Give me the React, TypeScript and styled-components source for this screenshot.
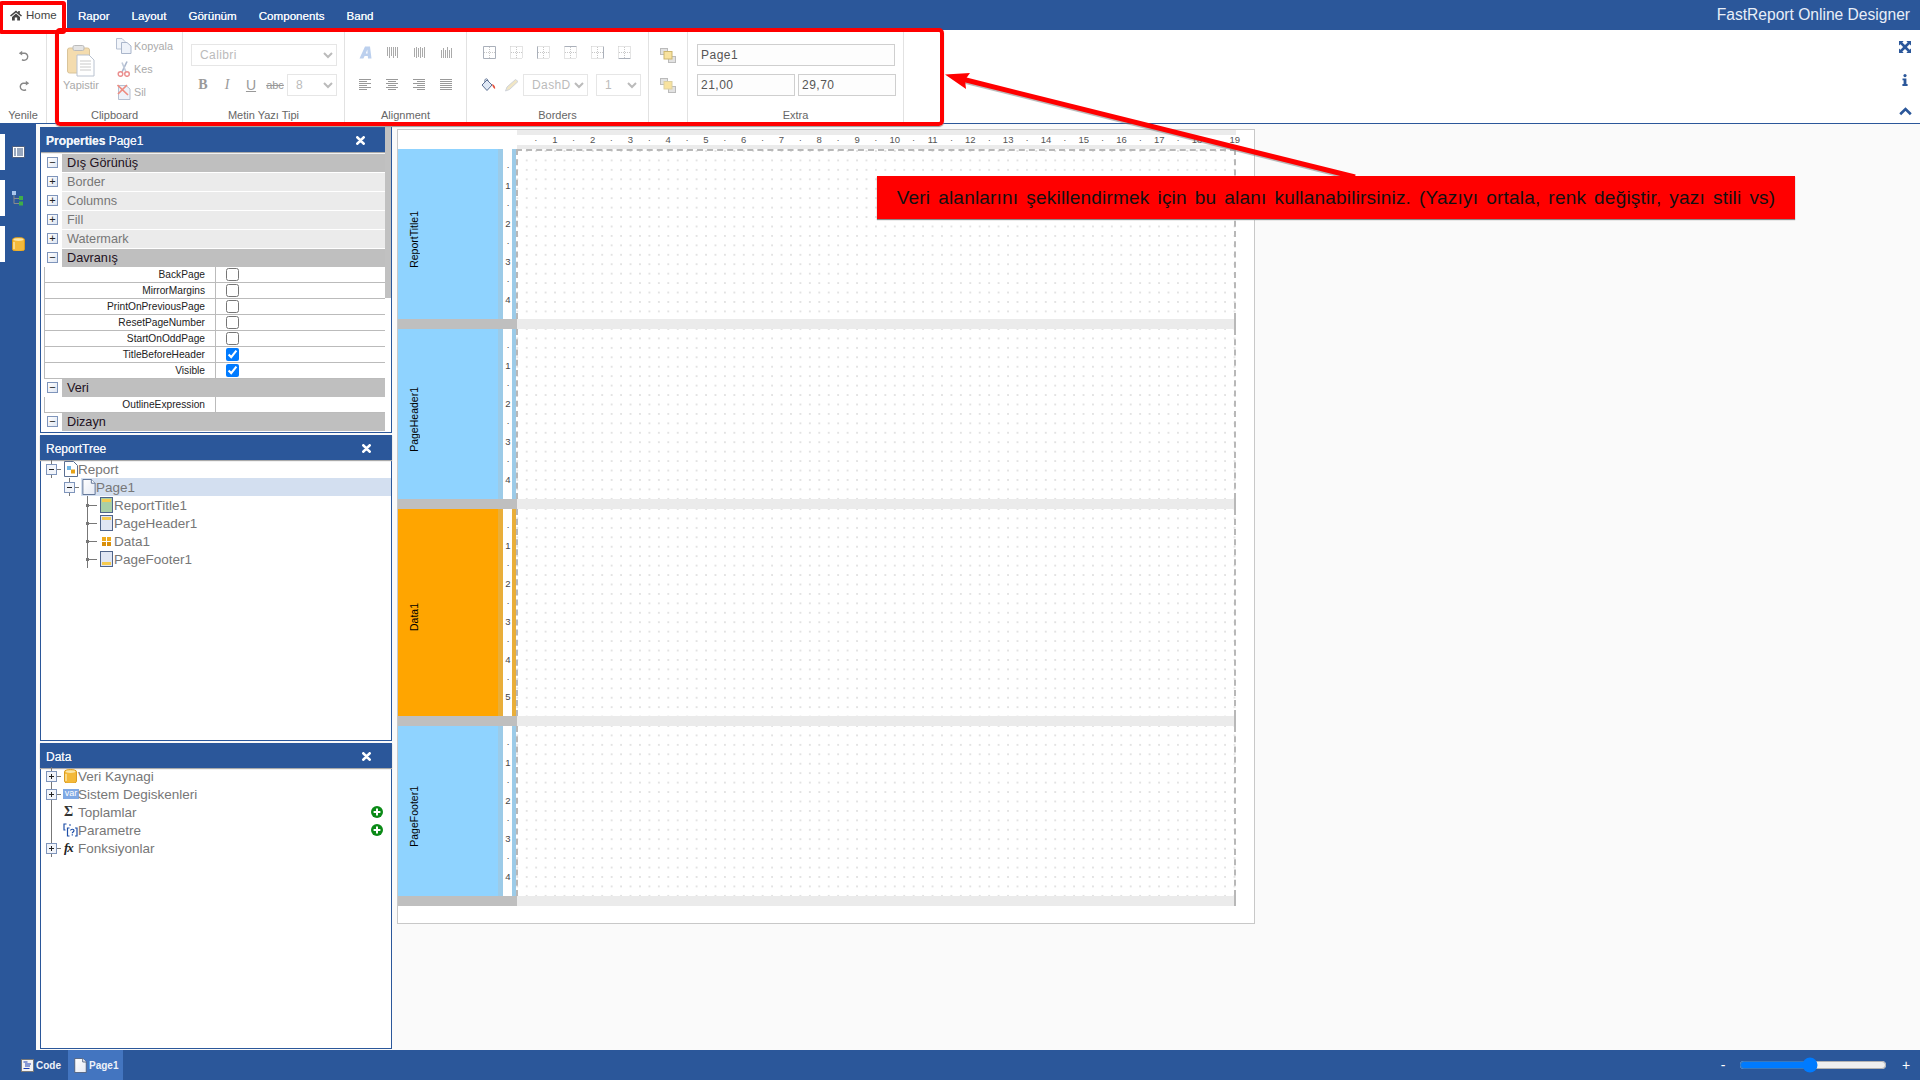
import React from "react";
import styled, { createGlobalStyle } from "styled-components";

const BLUE = "#2b579a";

const GlobalStyle = createGlobalStyle`
  html, body { margin: 0; padding: 0; height: 100%; overflow: hidden; background: #fafafa; }
  #root { height: 100%; }
  * { box-sizing: border-box; }
  body { font-family: "Liberation Sans", Arial, sans-serif; }
`;

/* ---------- icons ---------- */

function HomeIcon() {
  return (
    <svg width="12" height="11" viewBox="0 0 12 11">
      <path d="M6 0.5 L0 5.6 L1 6.6 L6 2.4 L11 6.6 L12 5.6 L9.8 3.7 V1 H8.2 V2.4Z" fill="#444" />
      <path d="M2 7 L6 3.6 L10 7 V10.5 H7.2 V7.6 H4.8 V10.5 H2Z" fill="#444" />
    </svg>
  );
}

function CloseIcon() {
  return (
    <svg width="9" height="9" viewBox="0 0 10 10">
      <path d="M1.5 1.5 L8.5 8.5 M8.5 1.5 L1.5 8.5" stroke="#fff" strokeWidth="3" strokeLinecap="round" />
    </svg>
  );
}

function UndoIcon({ flip }: { flip?: boolean }) {
  return (
    <svg width="12" height="12" viewBox="0 0 12 12" style={flip ? { transform: "scaleX(-1)" } : undefined}>
      <path d="M3 3.2 H7 A3.6 3.6 0 1 1 4 9.6" fill="none" stroke="#888" strokeWidth="1.4" />
      <path d="M0.8 3.2 L4.2 0.8 V5.6Z" fill="#888" />
    </svg>
  );
}

function PageGlyph({ w = 14, h = 17, stroke = "#5b6f92", fill = "#e4e9f4" }: { w?: number; h?: number; stroke?: string; fill?: string }) {
  return (
    <svg width={w} height={h} viewBox="0 0 14 17">
      <defs>
        <linearGradient id="pg" x1="0" y1="0" x2="1" y2="1">
          <stop offset="0" stopColor="#ffffff" />
          <stop offset="1" stopColor={fill} />
        </linearGradient>
      </defs>
      <path d="M0.5 0.5 H9.5 L13.5 4.5 V16.5 H0.5Z" fill="url(#pg)" stroke={stroke} />
      <path d="M9.5 0.5 V4.5 H13.5" fill="#fff" stroke={stroke} />
    </svg>
  );
}

function PasteIcon() {
  return (
    <svg width="28" height="32" viewBox="0 0 28 32">
      <rect x="0.5" y="3" width="22" height="25" rx="2" fill="#f4dcae" stroke="#d9c49a" />
      <rect x="6" y="0.5" width="11" height="5" rx="1.5" fill="#e4e4e4" stroke="#bbb" />
      <path d="M10 10 H22 L27 15 V31 H10Z" fill="#fff" stroke="#b9c2d0" />
      <path d="M13 16 H24 M13 19 H24 M13 22 H24 M13 25 H24" stroke="#c9c9c9" />
    </svg>
  );
}

function CopyIcon() {
  return (
    <svg width="16" height="16" viewBox="0 0 16 16">
      <path d="M0.5 0.5 H6 L9 3.5 V11 H0.5Z" fill="#f2f5fa" stroke="#b6c0d2" />
      <path d="M5.5 4.5 H11 L15 8 V15.5 H5.5Z" fill="#eef2f9" stroke="#aab6cb" />
    </svg>
  );
}

function CutIcon() {
  return (
    <svg width="14" height="16" viewBox="0 0 14 16">
      <path d="M10 0.5 L5 11" stroke="#a9b6cc" strokeWidth="1.6" />
      <path d="M5 1.5 L9 11" stroke="#c3ccdb" strokeWidth="1.6" />
      <circle cx="3.5" cy="13" r="2.3" fill="none" stroke="#eb9090" strokeWidth="1.5" />
      <circle cx="10" cy="13" r="2.3" fill="none" stroke="#eb9090" strokeWidth="1.5" />
    </svg>
  );
}

function DeleteIcon() {
  return (
    <svg width="14" height="16" viewBox="0 0 14 16">
      <path d="M1.5 1.5 H9 L13 5 V15.5 H1.5Z" fill="#eef2f9" stroke="#b6c0d2" />
      <path d="M0.5 1 L11 11 M10 1 L1 10" stroke="#ee8c80" strokeWidth="1.7" />
    </svg>
  );
}

function TextStyleIcon() {
  return (
    <svg width="14" height="13" viewBox="0 0 14 13">
      <path d="M0.5 12.5 L6 0.5 H11 L12.5 12.5 H9 L8.8 10 H5.6 L4.4 12.5Z M6.8 7.6 H8.6 L8.3 3.6Z" fill="#bcd0ee" fillRule="evenodd" />
    </svg>
  );
}

function BarsIcon({ variant }: { variant: number }) {
  const tops = variant === 0 ? [1, 1, 1, 1, 1, 1] : variant === 1 ? [2, 1, 2, 1, 2, 1] : [4, 2, 4, 1, 4, 2];
  const bots = variant === 0 ? [10, 12, 10, 12, 10, 12] : variant === 1 ? [11, 12, 11, 12, 11, 12] : [12, 12, 12, 12, 12, 12];
  return (
    <svg width="12" height="13" viewBox="0 0 12 13">
      {tops.map((t, i) => (
        <path key={i} d={`M${i * 2 + 0.5} ${t} V${bots[i]}`} stroke="#aaa" />
      ))}
    </svg>
  );
}

function AlignIcon({ variant }: { variant: "left" | "center" | "right" | "justify" }) {
  const widths = [12, 8, 12, 8, 12, 8];
  return (
    <svg width="13" height="11" viewBox="0 0 13 11">
      {widths.map((w, i) => {
        const len = variant === "justify" ? 12 : w;
        const x = variant === "center" ? (12 - len) / 2 : variant === "right" ? 12 - len : 0;
        return <path key={i} d={`M${x} ${i * 2 + 0.5} h${len}`} stroke="#999" />;
      })}
    </svg>
  );
}

function BorderIcon({ variant }: { variant: number }) {
  const solid = "#aab0ba";
  const dot = "#c8c8c8";
  const edge = (on: boolean) => ({ stroke: on ? solid : dot, strokeDasharray: on ? undefined : "1 1" });
  return (
    <svg width="13" height="13" viewBox="0 0 13 13">
      <path d="M0.5 0.5 H12.5" {...edge(variant === 0 || variant === 3)} />
      <path d="M0.5 12.5 H12.5" {...edge(variant === 0 || variant === 5)} />
      <path d="M0.5 0.5 V12.5" {...edge(variant === 0 || variant === 2)} />
      <path d="M12.5 0.5 V12.5" {...edge(variant === 0 || variant === 4)} />
      <path d="M6.5 1 V12 M1 6.5 H12" stroke={dot} strokeDasharray="1 1" />
    </svg>
  );
}

function FillIcon() {
  return (
    <svg width="15" height="14" viewBox="0 0 15 14">
      <path d="M1 7 L6 2 L11 7 L6 12.5Z" fill="#dfe8f5" stroke="#5b6f92" />
      <path d="M4 4 C3 0 7 0 7 3" fill="none" stroke="#5b6f92" />
      <path d="M11 6 C14 7 14.5 10 14 11 C12.5 10 11.5 9 11 6Z" fill="#e5533f" />
    </svg>
  );
}

function PencilIcon() {
  return (
    <svg width="14" height="14" viewBox="0 0 14 14">
      <path d="M0.5 13 L2 9 L10.5 1.5 L13 3.5 L4.5 11.5Z" fill="#f1e6c4" stroke="#cfd3da" />
    </svg>
  );
}

function OrderIcon({ front }: { front?: boolean }) {
  return (
    <svg width="16" height="15" viewBox="0 0 16 15">
      <rect x="0.5" y="0.5" width="7" height="6" fill="#e2e2e2" stroke="#bbb" />
      <rect x="8.5" y="8.5" width="7" height="6" fill="#e2e2e2" stroke="#bbb" />
      <rect x="4" y="3.5" width="8" height="7.5" fill="#f8e29e" stroke={front ? "#cdb66e" : "#ddd0a0"} />
    </svg>
  );
}

function ExpandIcon() {
  return (
    <svg width="12" height="12" viewBox="0 0 13 13">
      <path d="M0 0 H5 L3.6 1.6 L6.5 4.4 L9.4 1.6 L8 0 H13 V5 L11.4 3.6 L8.6 6.5 L11.4 9.4 L13 8 V13 H8 L9.4 11.4 L6.5 8.6 L3.6 11.4 L5 13 H0 V8 L1.6 9.4 L4.4 6.5 L1.6 3.6 L0 5Z" fill={BLUE} />
    </svg>
  );
}

function InfoIcon() {
  return (
    <svg width="6" height="12" viewBox="0 0 6 12">
      <circle cx="3" cy="1.6" r="1.6" fill={BLUE} />
      <path d="M0.5 4.4 H4.4 V10 H5.6 V12 H0.4 V10 H1.6 V6.2 H0.5Z" fill={BLUE} />
    </svg>
  );
}

function ChevronUpIcon() {
  return (
    <svg width="13" height="9" viewBox="0 0 13 9">
      <path d="M1.2 7.2 L6.5 2 L11.8 7.2" fill="none" stroke={BLUE} strokeWidth="2.6" />
    </svg>
  );
}

function NavTableIcon() {
  return (
    <svg width="13" height="12" viewBox="0 0 13 12">
      <rect x="0.5" y="0.5" width="12" height="11" fill="#fff" stroke="#51617f" />
      <path d="M2 3 h2 M5 3 h6 M2 5 h2 M5 5 h6 M2 7 h2 M5 7 h6 M2 9 h2 M5 9 h6" stroke="#33507f" />
    </svg>
  );
}

function NavTreeIcon() {
  return (
    <svg width="13" height="15" viewBox="0 0 13 15">
      <rect x="0" y="0" width="4" height="4" fill="#a9c6ee" />
      <path d="M2 4 V12.5 H7 M2 7.5 H7" fill="none" stroke="#8a8a8a" />
      <rect x="7" y="5" width="4" height="4" fill="#3fae49" />
      <rect x="7" y="10.5" width="4" height="4" fill="#3fae49" />
    </svg>
  );
}

function DatabaseIcon({ size = 13 }: { size?: number }) {
  return (
    <svg width={size} height={size * 1.15} viewBox="0 0 13 15">
      <path d="M0.5 2.5 C0.5 0 12.5 0 12.5 2.5 V12.5 C12.5 15 0.5 15 0.5 12.5Z" fill="#f4b93a" stroke="#d99a1c" />
      <ellipse cx="6.5" cy="2.6" rx="5" ry="1.4" fill="#fbe6a8" />
      <path d="M2 5 V12" stroke="#fbe6a8" strokeWidth="1.4" />
    </svg>
  );
}

function ReportIcon() {
  return (
    <svg width="14" height="16" viewBox="0 0 14 16">
      <path d="M0.5 0.5 H9.5 L13.5 4.5 V15.5 H0.5Z" fill="#fff" stroke="#5b6f92" />
      <rect x="3" y="5" width="4" height="4" fill="#6fb6e6" />
      <rect x="7" y="8.5" width="4" height="4" fill="#e8a316" />
    </svg>
  );
}

function BandIcon({ variant }: { variant: "title" | "header" | "footer" }) {
  const fill = variant === "title" ? "#a9cfa6" : "#e0e6f3";
  return (
    <svg width="13" height="16" viewBox="0 0 13 16">
      <rect x="0.5" y="0.5" width="12" height="15" fill={fill} stroke="#4f648a" />
      {variant === "footer" ? <rect x="2" y="11" width="9" height="3" fill="#f6cb4f" /> : <rect x="2" y="2" width="9" height="3" fill="#f6cb4f" />}
    </svg>
  );
}

function DataBandIcon() {
  return (
    <svg width="13" height="13" viewBox="0 0 13 13">
      <rect x="2" y="2" width="4" height="4" fill="#eeab1c" />
      <rect x="7" y="2" width="4" height="4" fill="#eeab1c" />
      <rect x="2" y="7" width="4" height="4" fill="#d98f0c" />
      <rect x="7" y="7" width="4" height="4" fill="#d98f0c" />
    </svg>
  );
}

function ParamIcon() {
  return (
    <svg width="15" height="14" viewBox="0 0 15 14">
      <path d="M3.5 1 H1 V7 H2.5" fill="none" stroke="#1e4fa8" strokeWidth="1.2" />
      <path d="M7 1 V3" stroke="#1e4fa8" />
      <path d="M6.5 5 H4.5 V13 H6.5 M12 5 H14 V13 H12" fill="none" stroke="#1e4fa8" strokeWidth="1.2" />
      <path d="M7.5 7.5 C7.8 5.8 11 5.8 11 7.6 C11 9 9.3 9 9.3 10.3 M9.3 11.2 V12.4" fill="none" stroke="#1e4fa8" strokeWidth="1.2" />
    </svg>
  );
}

function AddIcon() {
  return (
    <svg width="12" height="12" viewBox="0 0 12 12">
      <circle cx="6" cy="6" r="6" fill="#0a8a16" />
      <path d="M6 2.6 V9.4 M2.6 6 H9.4" stroke="#fff" strokeWidth="2" />
    </svg>
  );
}

function CodeIcon() {
  return (
    <svg width="13" height="13" viewBox="0 0 13 13">
      <rect x="0.5" y="0.5" width="12" height="12" fill="#f3f3f3" stroke="#777" />
      <path d="M2.5 3 h4 M4 5 h6 M4 7 h5 M2.5 9.5 h6" stroke="#1b3fb5" />
    </svg>
  );
}

function ConnectorGlyph({ kind }: { kind: "minus" | "plus" | "line" | "pass" }) {
  const color = "#777";
  return (
    <ConnectorBox>
      <svg width="22" height="18" viewBox="0 0 22 18">
        {kind === "line" ? (
          <>
            <path d="M10.5 0 V18" stroke={color} />
            <path d="M10.5 9.5 H20" stroke={color} />
            <rect x="9" y="8" width="3" height="3" fill={color} />
          </>
        ) : kind === "pass" ? (
          <path d="M10.5 0 V18" stroke={color} />
        ) : (
          <>
            <path d="M10.5 0 V18 M15 9.5 H20" stroke={color} />
            <rect x="5.5" y="4.5" width="10" height="10" fill="#f1f4fa" stroke="#7f95bb" />
            <path d="M8 9.5 H13" stroke="#222" />
            {kind === "plus" && <path d="M10.5 7 V12" stroke="#222" />}
          </>
        )}
      </svg>
    </ConnectorBox>
  );
}

/* ---------- data ---------- */

const MENU = ["Rapor", "Layout", "Görünüm", "Components", "Band"];

const BEHAVIOUR = [
  { name: "BackPage", checked: false },
  { name: "MirrorMargins", checked: false },
  { name: "PrintOnPreviousPage", checked: false },
  { name: "ResetPageNumber", checked: false },
  { name: "StartOnOddPage", checked: false },
  { name: "TitleBeforeHeader", checked: true },
  { name: "Visible", checked: true },
];

const BANDS = [
  { name: "ReportTitle1", height: 170, color: "#8fd3ff", edge: "#9ccbe8" },
  { name: "PageHeader1", height: 170, color: "#8fd3ff", edge: "#9ccbe8" },
  { name: "Data1", height: 207, color: "#ffa500", edge: "#e9ae3a" },
  { name: "PageFooter1", height: 170, color: "#8fd3ff", edge: "#9ccbe8" },
];

function rulerTicks(count: number) {
  return Array.from({ length: count }, (_, i) => (i % 2 === 0 ? "·" : String((i + 1) / 2)));
}

/* ---------- page ---------- */

export default function App() {
  return (
    <>
      <GlobalStyle />
      <Shell>
        <TopBar>
          <HomeTab>
            <HomeIcon />
            Home
          </HomeTab>
          {MENU.map((item) => (
            <MenuItem key={item}>{item}</MenuItem>
          ))}
          <Brand>FastReport Online Designer</Brand>
        </TopBar>

        <Ribbon>
          <Group $width={47}>
            <GroupBody $top={15}>
              <IconCell $w={47}><UndoIcon /></IconCell>
              <IconCell $w={47}><UndoIcon flip /></IconCell>
            </GroupBody>
            <GroupLabel>Yenile</GroupLabel>
          </Group>

          <Group $width={136}>
            <ClipboardBody>
              <PasteButton>
                <PasteIcon />
                <span>Yapistir</span>
              </PasteButton>
              <ClipList>
                <ClipItem><CopyIcon />Kopyala</ClipItem>
                <ClipItem><CutIcon />Kes</ClipItem>
                <ClipItem><DeleteIcon />Sil</ClipItem>
              </ClipList>
            </ClipboardBody>
            <GroupLabel>Clipboard</GroupLabel>
          </Group>

          <Group $width={162}>
            <GroupBody $pad={8}>
              <DimSelect $w={146} disabled defaultValue="Calibri">
                <option>Calibri</option>
              </DimSelect>
              <ToolRow>
                <TextButton $bold>B</TextButton>
                <TextButton $italic>I</TextButton>
                <TextButton $underline>U</TextButton>
                <TextButton $strike>abc</TextButton>
                <DimSelect $w={50} disabled defaultValue="8">
                  <option>8</option>
                </DimSelect>
              </ToolRow>
            </GroupBody>
            <GroupLabel>Metin Yazı Tipi</GroupLabel>
          </Group>

          <Group $width={122}>
            <GroupBody $pad={7} $top={11}>
              <ToolRow>
                <IconCell $w={27}><TextStyleIcon /></IconCell>
                <IconCell $w={27}><BarsIcon variant={0} /></IconCell>
                <IconCell $w={27}><BarsIcon variant={1} /></IconCell>
                <IconCell $w={27}><BarsIcon variant={2} /></IconCell>
              </ToolRow>
              <ToolRow $nudge={2}>
                <IconCell $w={27}><AlignIcon variant="left" /></IconCell>
                <IconCell $w={27}><AlignIcon variant="center" /></IconCell>
                <IconCell $w={27}><AlignIcon variant="right" /></IconCell>
                <IconCell $w={27}><AlignIcon variant="justify" /></IconCell>
              </ToolRow>
            </GroupBody>
            <GroupLabel>Alignment</GroupLabel>
          </Group>

          <Group $width={182}>
            <GroupBody $pad={9} $top={11}>
              <ToolRow>
                {[0, 1, 2, 3, 4, 5].map((v) => (
                  <IconCell $w={27} key={v}><BorderIcon variant={v} /></IconCell>
                ))}
              </ToolRow>
              <ToolRow $nudge={3}>
                <IconCell $w={24}><FillIcon /></IconCell>
                <IconCell $w={23}><PencilIcon /></IconCell>
                <DimSelect $w={65} disabled defaultValue="DashDot">
                  <option>DashDot</option>
                </DimSelect>
                <DimSelect $w={45} $gap={8} disabled defaultValue="1">
                  <option>1</option>
                </DimSelect>
              </ToolRow>
            </GroupBody>
            <GroupLabel>Borders</GroupLabel>
          </Group>

          <Group $width={39}>
            <GroupBody>
              <IconCell $w={38}><OrderIcon front /></IconCell>
              <IconCell $w={38}><OrderIcon /></IconCell>
            </GroupBody>
            <GroupLabel />
          </Group>

          <Group $width={216}>
            <GroupBody $pad={9}>
              <FieldInput $w={198} defaultValue="Page1" />
              <ToolRow>
                <FieldInput $w={98} defaultValue="21,00" />
                <FieldInput $w={98} $gap={3} defaultValue="29,70" />
              </ToolRow>
            </GroupBody>
            <GroupLabel>Extra</GroupLabel>
          </Group>

          <RibbonActions>
            <ExpandIcon />
            <InfoIcon />
            <ChevronUpIcon />
          </RibbonActions>
        </Ribbon>

        <Middle>
          <SideNav>
            <NavTab><NavTableIcon /></NavTab>
            <NavTab><NavTreeIcon /></NavTab>
            <NavTab><DatabaseIcon /></NavTab>
          </SideNav>

          <PanelColumn>
            <PropertiesPanel>
              <PropertiesScroll>
                <PanelHeader $closeRight={21}>
                  <span><b>Properties</b> Page1</span>
                  <CloseIcon />
                </PanelHeader>
                <Category open label="Dış Görünüş" />
                <Category label="Border" />
                <Category label="Columns" />
                <Category label="Fill" />
                <Category label="Watermark" />
                <Category open label="Davranış" />
                {BEHAVIOUR.map((row) => (
                  <PropRow key={row.name}>
                    <PropName>{row.name}</PropName>
                    <PropValue>
                      <input type="checkbox" defaultChecked={row.checked} />
                    </PropValue>
                  </PropRow>
                ))}
                <Category open tight label="Veri" />
                <PropRow>
                  <PropName>OutlineExpression</PropName>
                  <PropValue />
                </PropRow>
                <Category open tight label="Dizayn" />
              </PropertiesScroll>
              <ScrollTrack>
                <ScrollThumb />
              </ScrollTrack>
            </PropertiesPanel>

            <Panel>
              <PanelHeader $closeRight={21}>
                <span>ReportTree</span>
                <CloseIcon />
              </PanelHeader>
              <TreeBody>
                <TreeRow>
                  <ConnectorGlyph kind="minus" />
                  <TreeNode><NodeIcon><ReportIcon /></NodeIcon>Report</TreeNode>
                </TreeRow>
                <TreeRow $level={1}>
                  <ConnectorGlyph kind="minus" />
                  <TreeNode $selected><NodeIcon><PageGlyph w={14} h={16} /></NodeIcon>Page1</TreeNode>
                </TreeRow>
                <TreeRow $level={2}>
                  <ConnectorGlyph kind="line" />
                  <TreeNode><NodeIcon><BandIcon variant="title" /></NodeIcon>ReportTitle1</TreeNode>
                </TreeRow>
                <TreeRow $level={2}>
                  <ConnectorGlyph kind="line" />
                  <TreeNode><NodeIcon><BandIcon variant="header" /></NodeIcon>PageHeader1</TreeNode>
                </TreeRow>
                <TreeRow $level={2}>
                  <ConnectorGlyph kind="line" />
                  <TreeNode><NodeIcon><DataBandIcon /></NodeIcon>Data1</TreeNode>
                </TreeRow>
                <TreeRow $level={2}>
                  <ConnectorGlyph kind="line" />
                  <TreeNode><NodeIcon><BandIcon variant="footer" /></NodeIcon>PageFooter1</TreeNode>
                </TreeRow>
              </TreeBody>
            </Panel>

            <Panel>
              <PanelHeader $closeRight={21}>
                <span>Data</span>
                <CloseIcon />
              </PanelHeader>
              <TreeBody $lift={1}>
                <TreeRow>
                  <ConnectorGlyph kind="plus" />
                  <TreeNode><NodeIcon><DatabaseIcon /></NodeIcon>Veri Kaynagi</TreeNode>
                </TreeRow>
                <TreeRow>
                  <ConnectorGlyph kind="plus" />
                  <TreeNode><VarBadge>var</VarBadge>Sistem Degiskenleri</TreeNode>
                </TreeRow>
                <TreeRow>
                  <ConnectorGlyph kind="pass" />
                  <TreeNode><SigmaGlyph>Σ</SigmaGlyph>Toplamlar<RowAction><AddIcon /></RowAction></TreeNode>
                </TreeRow>
                <TreeRow>
                  <ConnectorGlyph kind="pass" />
                  <TreeNode><NodeIcon><ParamIcon /></NodeIcon>Parametre<RowAction><AddIcon /></RowAction></TreeNode>
                </TreeRow>
                <TreeRow>
                  <ConnectorGlyph kind="plus" />
                  <TreeNode><FxGlyph>fx</FxGlyph>Fonksiyonlar</TreeNode>
                </TreeRow>
              </TreeBody>
            </Panel>
          </PanelColumn>

          <Workspace>
            <ReportPage>
              <TopRuler>
                <TopRulerTicks>
                  {rulerTicks(38).map((t, i) => (
                    <TopTick key={i}>{t}</TopTick>
                  ))}
                </TopRulerTicks>
              </TopRuler>
              {BANDS.map((band, index) => (
                <React.Fragment key={band.name}>
                  <BandRow $height={band.height}>
                    <BandTitle $color={band.color} $edge={band.edge}>
                      <BandName>{band.name}</BandName>
                    </BandTitle>
                    <SideRuler>
                      {rulerTicks(Math.floor(band.height / 18.9)).map((t, i) => (
                        <SideTick key={i}>{t}</SideTick>
                      ))}
                    </SideRuler>
                    <BandStrip $edge={band.edge} />
                    <BandCanvas $first={index === 0} />
                  </BandRow>
                  <BandSeparator>
                    <SeparatorLeft />
                    <SeparatorRight />
                  </BandSeparator>
                </React.Fragment>
              ))}
            </ReportPage>
          </Workspace>
        </Middle>

        <StatusBar>
          <StatusTab>
            <CodeIcon />
            Code
          </StatusTab>
          <StatusTab $active>
            <PageGlyph w={13} h={15} stroke="#4b5b78" />
            Page1
          </StatusTab>
          <ZoomBox>
            <ZoomSign>-</ZoomSign>
            <ZoomSlider type="range" min={0} max={100} defaultValue={48} />
            <ZoomSign $plus>+</ZoomSign>
          </ZoomBox>
        </StatusBar>

        <HomeMarker />
        <RibbonMarker />
        <ArrowLayer width="1920" height="1080" viewBox="0 0 1920 1080">
          <path d="M1355 177 L962 79" stroke="#777" strokeWidth="5" opacity="0.5" transform="translate(0 1.5)" />
          <path d="M1355 177 L962 79" stroke="#ff0000" strokeWidth="5" />
          <path d="M945 74.5 L970 73 L965 80 L966 89Z" fill="#ff0000" />
        </ArrowLayer>
        <Callout>Veri alanlarını şekillendirmek için bu alanı kullanabilirsiniz. (Yazıyı ortala, renk değiştir, yazı stili vs)</Callout>
      </Shell>
    </>
  );
}

function Category({ label, open, tight }: { label: string; open?: boolean; tight?: boolean }) {
  return (
    <CategoryRow $tight={tight}>
      <ExpanderBox>{open ? "−" : "+"}</ExpanderBox>
      <CategoryLabel $open={open}>{label}</CategoryLabel>
    </CategoryRow>
  );
}

/* ---------- styles ---------- */

const Shell = styled.div`
  position: relative;
  display: flex;
  flex-direction: column;
  width: 1920px;
  height: 1080px;
  overflow: hidden;
  background: #fafafa;
`;

const TopBar = styled.div`
  display: flex;
  align-items: center;
  height: 30px;
  background: ${BLUE};
  color: #fff;
`;

const HomeTab = styled.div`
  display: flex;
  align-items: center;
  gap: 4px;
  width: 67px;
  height: 30px;
  padding-left: 10px;
  background: #fff;
  color: #444;
  font-size: 11.5px;
`;

const MenuItem = styled.div`
  padding: 0 11px;
  font-size: 11.6px;
  color: #f2f5fa;
  text-shadow: 0 0 0.6px #fff;
`;

const Brand = styled.div`
  margin-left: auto;
  padding-right: 10px;
  font-size: 15.6px;
  color: #e8eef8;
`;

const Ribbon = styled.div`
  display: flex;
  height: 94px;
  background: #fff;
  border-bottom: 1px solid ${BLUE};
`;

const Group = styled.div<{ $width: number }>`
  display: flex;
  flex-direction: column;
  width: ${(p) => p.$width}px;
  height: 93px;
  border-right: 1px solid #e2e2e2;
`;

const GroupBody = styled.div<{ $pad?: number; $top?: number }>`
  display: flex;
  flex-direction: column;
  flex: none;
  height: 78px;
  gap: 8px;
  padding: ${(p) => p.$top ?? 14}px 0 0 ${(p) => p.$pad ?? 0}px;
`;

const GroupLabel = styled.div`
  height: 15px;
  font-size: 11px;
  line-height: 15px;
  text-align: center;
  color: #666;
`;

const ToolRow = styled.div<{ $nudge?: number }>`
  display: flex;
  align-items: center;
  height: 22px;
  margin-top: ${(p) => p.$nudge ?? 0}px;
`;

const IconCell = styled.div<{ $w: number }>`
  display: flex;
  align-items: center;
  justify-content: center;
  flex: none;
  width: ${(p) => p.$w}px;
  height: 22px;
`;

const ClipboardBody = styled.div`
  display: flex;
  flex: none;
  height: 78px;
  padding: 4px 0 0 8px;
`;

const PasteButton = styled.div`
  display: flex;
  flex-direction: column;
  align-items: center;
  gap: 2px;
  width: 52px;
  padding-top: 11px;
  font-size: 11px;
  color: #aaa;
`;

const ClipList = styled.div`
  display: flex;
  flex-direction: column;
  padding-left: 9px;
`;

const ClipItem = styled.div`
  display: grid;
  grid-template-columns: 16px auto;
  column-gap: 2px;
  align-items: center;
  justify-items: start;
  height: 23px;
  font-size: 10.8px;
  color: #aaa;
  svg {
    justify-self: center;
  }
`;

const TextButton = styled.div<{ $bold?: boolean; $italic?: boolean; $underline?: boolean; $strike?: boolean }>`
  flex: none;
  width: 24px;
  text-align: center;
  font-family: ${(p) => (p.$bold || p.$italic ? '"Liberation Serif", serif' : '"Liberation Sans", sans-serif')};
  font-size: ${(p) => (p.$strike ? 11 : 14)}px;
  font-weight: ${(p) => (p.$bold ? 700 : 400)};
  font-style: ${(p) => (p.$italic ? "italic" : "normal")};
  text-decoration: ${(p) => (p.$underline ? "underline" : p.$strike ? "line-through" : "none")};
  color: #999;
`;

const DimSelect = styled.select<{ $w: number; $gap?: number }>`
  flex: none;
  width: ${(p) => p.$w}px;
  height: 22px;
  margin-left: ${(p) => p.$gap ?? 0}px;
  padding-left: 4px;
  background: #fff;
  border: 1px solid #e6e6e6;
  border-radius: 0;
  font-family: "Liberation Sans", sans-serif;
  font-size: 12px;
  letter-spacing: 0.4px;
  color: #bbb;
  opacity: 1;
`;

const FieldInput = styled.input<{ $w: number; $gap?: number }>`
  flex: none;
  width: ${(p) => p.$w}px;
  height: 22px;
  margin-left: ${(p) => p.$gap ?? 0}px;
  padding: 0 3px;
  background: #fdfdfd;
  border: 1px solid #cfcfcf;
  font-family: "Liberation Sans", sans-serif;
  font-size: 12px;
  letter-spacing: 0.5px;
  color: #555;
`;

const RibbonActions = styled.div`
  display: flex;
  flex-direction: column;
  align-items: center;
  gap: 21px;
  width: 30px;
  margin: 11px 0 0 auto;
`;

const Middle = styled.div`
  display: flex;
  flex: 1;
  min-height: 0;
`;

const SideNav = styled.div`
  display: flex;
  flex-direction: column;
  gap: 10px;
  flex: none;
  width: 36px;
  padding-top: 10px;
  background: ${BLUE};
`;

const NavTab = styled.div`
  display: flex;
  align-items: center;
  height: 36px;
  padding-left: 12px;
  border-left: 5px solid #fff;
  & > svg {
    margin-left: -5px;
  }
`;

const PanelColumn = styled.div`
  display: flex;
  flex-direction: column;
  gap: 2px;
  flex: none;
  width: 352px;
  margin-left: 4px;
  padding: 3px 0 1px;
`;

const Panel = styled.div`
  display: flex;
  flex-direction: column;
  flex: none;
  height: 306px;
  background: #fff;
  border: 1px solid ${BLUE};
  border-top: none;
`;

const PropertiesPanel = styled.div`
  display: flex;
  flex: none;
  height: 306px;
  background: #fff;
  border-left: 1px solid ${BLUE};
  border-bottom: 1px solid ${BLUE};
`;

const PropertiesScroll = styled.div`
  flex: 1;
  min-width: 0;
  overflow: hidden;
`;

const ScrollTrack = styled.div`
  flex: none;
  width: 7px;
  border-right: 1px solid ${BLUE};
`;

const ScrollThumb = styled.div`
  width: 6px;
  height: 171px;
  background: #c1c1c1;
`;

const PanelHeader = styled.div<{ $closeRight: number }>`
  display: flex;
  align-items: center;
  justify-content: space-between;
  flex: none;
  height: 25px;
  margin: 0 -1px;
  padding: 2px ${(p) => p.$closeRight}px 0 6px;
  background: ${BLUE};
  font-size: 12px;
  color: #fff;
  box-shadow: 0 1px 1px #aaa;
  b {
    font-weight: 700;
  }
  span {
    color: #eef2f9;
    text-shadow: 0 0 0.5px #fff;
  }
`;

const CategoryRow = styled.div<{ $tight?: boolean }>`
  display: flex;
  align-items: center;
  height: 19px;
  padding-left: 6px;
  margin-top: ${(p) => (p.$tight ? -1 : 0)}px;
  &:nth-child(2) {
    margin-top: 1px;
  }
`;

const ExpanderBox = styled.div`
  display: flex;
  align-items: center;
  justify-content: center;
  flex: none;
  width: 11px;
  height: 11px;
  margin-right: 4px;
  background: linear-gradient(135deg, #ffffff, #dfe6f2);
  border: 1px solid #7f95bb;
  font-size: 11px;
  line-height: 9px;
  color: #222;
`;

const CategoryLabel = styled.div<{ $open?: boolean }>`
  flex: 1;
  height: 18px;
  padding-left: 5px;
  background: ${(p) => (p.$open ? "#bfbfbf" : "#ebebeb")};
  font-size: 12.7px;
  line-height: 18px;
  color: ${(p) => (p.$open ? "#221122" : "#777")};
`;

const PropRow = styled.div`
  display: flex;
  height: 16px;
  margin-left: 3px;
  border-left: 1px solid #bbb;
  border-bottom: 1px solid #bbb;
`;

const PropName = styled.div`
  flex: none;
  width: 171px;
  padding-right: 10px;
  border-right: 1px solid #bbb;
  text-align: right;
  font-size: 10.2px;
  line-height: 15px;
  color: #222;
`;

const PropValue = styled.div`
  display: flex;
  align-items: center;
  flex: 1;
  padding-left: 10px;
  input {
    width: 13px;
    height: 13px;
    margin: 0;
    accent-color: #007bff;
  }
`;

const TreeBody = styled.div<{ $lift?: number }>`
  display: flex;
  flex-direction: column;
  margin-top: ${(p) => -(p.$lift ?? 0)}px;
`;

const TreeRow = styled.div<{ $level?: number }>`
  display: flex;
  align-items: center;
  height: 18px;
  padding-left: ${(p) => (p.$level ?? 0) * 18}px;
`;

const ConnectorBox = styled.div`
  flex: none;
  width: 22px;
  height: 18px;
  line-height: 0;
`;

const TreeNode = styled.div<{ $selected?: boolean }>`
  display: flex;
  align-items: center;
  flex: 1;
  height: 18px;
  background: ${(p) => (p.$selected ? "#d3dff0" : "transparent")};
  font-size: 13.5px;
  color: #777;
`;

const NodeIcon = styled.span`
  display: inline-flex;
  align-items: center;
  justify-content: center;
  flex: none;
  width: 15px;
  height: 18px;
`;

const VarBadge = styled.span`
  flex: none;
  width: 16px;
  height: 10px;
  margin-right: -1px;
  background: #7fa8e4;
  font-size: 9px;
  line-height: 9px;
  text-align: center;
  color: #fff;
`;

const SigmaGlyph = styled.span`
  flex: none;
  width: 15px;
  padding-left: 1px;
  font-family: "Liberation Serif", serif;
  font-size: 14px;
  font-weight: 700;
  color: #333;
`;

const FxGlyph = styled.span`
  flex: none;
  width: 15px;
  padding-left: 1px;
  font-family: "Liberation Serif", serif;
  font-size: 13px;
  font-style: italic;
  font-weight: 700;
  letter-spacing: -1px;
  color: #222;
`;

const RowAction = styled.span`
  display: inline-flex;
  margin-left: auto;
  margin-right: 8px;
`;

const Workspace = styled.div`
  flex: 1;
  padding: 5px 0 0 5px;
`;

const ReportPage = styled.div`
  width: 858px;
  height: 795px;
  background: #fff;
  border: 1px solid #c8c8c8;
`;

const TopRuler = styled.div`
  width: 719px;
  height: 19px;
  margin-left: 119px;
  background: #fff;
  border-top: 5px solid #ebebeb;
  border-bottom: 4px solid #ebebeb;
`;

const TopRulerTicks = styled.div`
  display: flex;
  padding-left: 9.45px;
`;

const TopTick = styled.div`
  flex: none;
  width: 18.9px;
  margin-top: -1px;
  font-size: 9.5px;
  line-height: 12px;
  text-align: center;
  color: #555;
`;

const BandRow = styled.div<{ $height: number }>`
  display: flex;
  height: ${(p) => p.$height}px;
`;

const BandTitle = styled.div<{ $color: string; $edge: string }>`
  display: flex;
  align-items: center;
  flex: none;
  width: 105px;
  padding: 10px 0 0 8px;
  background: ${(p) => p.$color};
  border-right: 5px solid ${(p) => p.$edge};
`;

const BandName = styled.div`
  writing-mode: vertical-rl;
  transform: rotate(180deg);
  font-size: 10.5px;
  line-height: 16px;
  color: #000;
`;

const SideRuler = styled.div`
  flex: none;
  width: 9px;
  padding-top: 9.45px;
  background: #fff;
`;

const SideTick = styled.div`
  width: 9px;
  height: 18.9px;
  padding-left: 1px;
  font-size: 9.5px;
  line-height: 18.9px;
  text-align: center;
  color: #444;
`;

const BandStrip = styled.div<{ $edge: string }>`
  flex: none;
  width: 4px;
  background: ${(p) => p.$edge};
`;

const BandCanvas = styled.div<{ $first?: boolean }>`
  flex: none;
  width: 720px;
  background-color: #fff;
  background-image: radial-gradient(circle, #d0d0d0 0.55px, transparent 0.85px);
  background-size: 9.45px 9.45px;
  background-position: 4px 4.7px;
  border-left: 2px dashed #b8b8b8;
  border-right: 2px dashed #b8b8b8;
  border-top: ${(p) => (p.$first ? "2px dashed #b8b8b8" : "none")};
`;

const BandSeparator = styled.div`
  display: flex;
  height: 10px;
`;

const SeparatorLeft = styled.div`
  flex: none;
  width: 119px;
  background: #bfbfbf;
`;

const SeparatorRight = styled.div`
  flex: none;
  width: 719px;
  background: #ebebeb;
  border-right: 2px dashed #b8b8b8;
`;

const StatusBar = styled.div`
  display: flex;
  align-items: center;
  flex: none;
  height: 30px;
  padding-left: 13px;
  background: ${BLUE};
`;

const StatusTab = styled.div<{ $active?: boolean }>`
  display: flex;
  align-items: center;
  gap: 2px;
  height: 30px;
  padding: 0 5px 0 ${(p) => (p.$active ? 6 : 8)}px;
  margin-right: ${(p) => (p.$active ? 0 : 2)}px;
  background: ${(p) => (p.$active ? "#4375c0" : "transparent")};
  font-size: 10px;
  font-weight: 700;
  color: #eef2f9;
`;

const ZoomBox = styled.div`
  display: flex;
  align-items: center;
  gap: 13px;
  margin-left: auto;
  padding-right: 12px;
`;

const ZoomSign = styled.span<{ $plus?: boolean }>`
  width: 6px;
  margin-left: ${(p) => (p.$plus ? 2 : 0)}px;
  font-size: 14px;
  color: #fff;
  text-align: center;
`;

const ZoomSlider = styled.input`
  width: 148px;
  margin: 0;
  accent-color: #007bff;
`;

const HomeMarker = styled.div`
  position: absolute;
  left: -1px;
  top: 1px;
  width: 67px;
  height: 33px;
  border: 4px solid #ff0000;
  border-radius: 3px;
`;

const RibbonMarker = styled.div`
  position: absolute;
  left: 55px;
  top: 28px;
  width: 889px;
  height: 98px;
  border: 4px solid #ff0000;
  border-radius: 5px;
  box-shadow: 0 1px 1px #999;
`;

const ArrowLayer = styled.svg`
  position: absolute;
  left: 0;
  top: 0;
  pointer-events: none;
`;

const Callout = styled.div`
  position: absolute;
  left: 877px;
  top: 176px;
  width: 918px;
  height: 43px;
  background: #ff0000;
  box-shadow: 0 1px 1px #888;
  font-size: 19px;
  line-height: 43px;
  letter-spacing: 0.2px;
  word-spacing: 2.5px;
  text-align: center;
  color: #111;
`;
